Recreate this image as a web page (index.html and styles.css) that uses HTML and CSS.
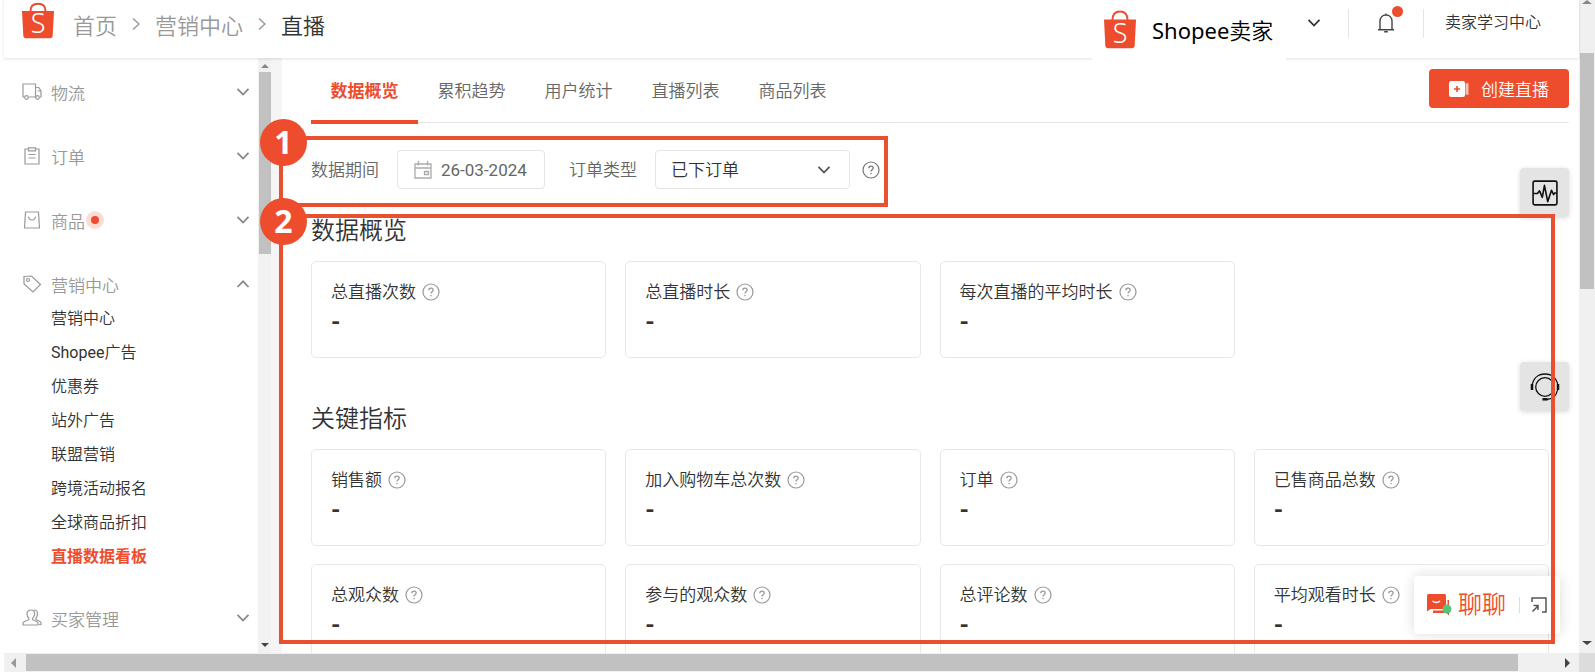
FILE: index.html
```html
<!DOCTYPE html>
<html lang="zh-CN">
<head>
<meta charset="utf-8">
<title>直播数据看板</title>
<link rel="stylesheet" href="styles.css">
</head>
<body>
<svg class="sprite" aria-hidden="true">
  <symbol id="down" viewBox="0 0 14 10"><path d="M1.500 1.800 7 7.500l5.500-5.700" fill="none" stroke="currentColor" stroke-width="1.800"/></symbol>
  <symbol id="up" viewBox="0 0 14 10"><path d="M1.500 8 7 2.300 12.500 8" fill="none" stroke="currentColor" stroke-width="1.800"/></symbol>
  <symbol id="next" viewBox="0 0 8 14"><path d="M1 1.500 7 7l-6 5.500" fill="none" stroke="currentColor" stroke-width="1.500"/></symbol>
  <symbol id="help" viewBox="0 0 18 18">
    <circle cx="9" cy="9" r="8" fill="none" stroke="currentColor" stroke-width="1.200"/>
    <path d="M6.800 7.300c0-1.400.9-2.200 2.200-2.200s2.200.8 2.200 2c0 1.600-2.200 1.700-2.200 3.400M9 11.900v1.300" fill="none" stroke="currentColor" stroke-width="1.300"/>
  </symbol>
</svg>

<div class="window">
  <div class="view">
    <div class="page">
      <header class="topbar">
        <svg class="logo" viewBox="0 0 32 39">
          <path d="M8.500 11C8.500 6 11.500 3.700 16 3.700s7.500 2.300 7.500 7.300" fill="none" stroke="#ee4d2d" stroke-width="2"/>
          <path d="M0 11h32l-1.300 24.500a2.800 2.800 0 0 1-2.800 2.700H4.100a2.800 2.800 0 0 1-2.800-2.700z" fill="#ee4d2d"/>
          <text x="16" y="33" text-anchor="middle" class="bag-letter">S</text>
        </svg>
        <nav class="crumbs" aria-label="面包屑">
          <a href="#">首页</a>
          <svg class="crumb-arrow"><use href="#next"/></svg>
          <a href="#">营销中心</a>
          <svg class="crumb-arrow"><use href="#next"/></svg>
          <span class="current">直播</span>
        </nav>
        <div class="account">
          <svg class="logo" viewBox="0 0 32 39">
            <path d="M8.500 10C8.500 4 11.500 1.500 16 1.500s7.500 2.500 7.500 8.500" fill="none" stroke="#ee4d2d" stroke-width="2"/>
            <path d="M0 9.500h32l-1.300 26a2.800 2.800 0 0 1-2.800 2.700H4.100a2.800 2.800 0 0 1-2.800-2.700z" fill="#ee4d2d"/>
            <text x="16" y="33" text-anchor="middle" class="bag-letter">S</text>
          </svg>
          <span><span class="latin">Shopee</span>卖家</span>
        </div>
        <div class="tools">
          <button class="plain account-toggle" aria-label="账户菜单"><svg class="chevron"><use href="#down"/></svg></button>
          <button class="plain bell" aria-label="通知">
            <svg viewBox="0 0 18 20" width="18" height="20" fill="none" stroke="#444" stroke-width="1.400"><path d="M1 16.800h16M3 16.500V8.500C3 4.500 5.500 2 9 2s6 2.500 6 6.500v8M9 2V.5M7.200 18.700h3.600"/></svg>
            <span class="bell-dot"></span>
          </button>
          <a class="learn" href="#">卖家学习中心</a>
        </div>
      </header>

      <div class="body">
        <aside class="sidebar">
          <nav class="menu">
            <button class="plain group">
              <svg viewBox="0 0 20 18" width="20" height="18" class="line"><path d="M2.500 14H1V1h12.500v13H7M13.500 4.500h3.200L19 8v6h-1M15.500 8H19"/><circle cx="4.500" cy="14.500" r="1.800"/><circle cx="15.500" cy="14.500" r="1.800"/></svg>
              <span>物流</span><svg class="chevron"><use href="#down"/></svg>
            </button>
            <button class="plain group">
              <svg viewBox="0 0 20 18" width="20" height="18" class="line"><path d="M6.500 2H3v15h14V2h-3.500M6.500.8h7v3h-7zM6.500 7.500h7M6.500 11h7"/></svg>
              <span>订单</span><svg class="chevron"><use href="#down"/></svg>
            </button>
            <button class="plain group">
              <svg viewBox="0 0 20 18" width="20" height="18" class="line"><path d="M3.500 1h13l1 16h-15zM6.500 5.500c.3 2.300 1.500 3.500 3.500 3.500s3.200-1.200 3.500-3.500"/></svg>
              <span>商品</span><i class="pulse"></i><svg class="chevron"><use href="#down"/></svg>
            </button>
            <button class="plain group">
              <svg viewBox="0 0 20 18" width="20" height="18" class="line"><path d="M2 1.500 9.500 1l9 8.500-7.500 7.500L2 9z"/><circle cx="6" cy="5" r="1.500"/></svg>
              <span>营销中心</span><svg class="chevron"><use href="#up"/></svg>
            </button>
            <div class="submenu">
              <a href="#">营销中心</a>
              <a href="#"><span class="latin">Shopee</span>广告</a>
              <a href="#">优惠券</a>
              <a href="#">站外广告</a>
              <a href="#">联盟营销</a>
              <a href="#">跨境活动报名</a>
              <a href="#">全球商品折扣</a>
              <a href="#" class="selected">直播数据看板</a>
            </div>
            <button class="plain group">
              <svg viewBox="0 0 20 18" width="20" height="18" class="line"><path d="M9 1C6.500 1 5 2.700 5 5c0 1.800.6 3 1.800 4v1.700L2 12.800c-.7.400-1 1-1 1.700V16h15v-1.500c0-.7-.3-1.300-1-1.700l-4.300-2.100V9C12 8 12.700 6.800 12.700 5 12.700 2.700 11.500 1 9 1zM12 1c2.500 0 3.500 2 3.500 4s-.5 3-1.500 4v1.500l4 2c.7.400 1 1 1 1.700V15.500h-2"/></svg>
              <span>买家管理</span><svg class="chevron"><use href="#down"/></svg>
            </button>
          </nav>
          <div class="side-scroll" aria-hidden="true">
            <i class="tri up"></i><i class="side-thumb"></i><i class="tri down"></i>
          </div>
        </aside>

        <main class="main">
          <div class="tabbar">
            <nav class="tabs">
              <a href="#" class="active">数据概览</a>
              <a href="#">累积趋势</a>
              <a href="#">用户统计</a>
              <a href="#">直播列表</a>
              <a href="#">商品列表</a>
            </nav>
            <button class="create">
              <svg viewBox="0 0 20 18" width="20" height="18"><rect x="0" y="1" width="16" height="16" rx="2" fill="#fff"/><path d="M16.500 3.500 19.500 3v12l-3-.5z" fill="#fbc0b2"/><path d="M8 6v6M5 9h6" stroke="#ee4d2d" stroke-width="1.600"/></svg>
              创建直播
            </button>
          </div>

          <form class="filters">
            <label for="period">数据期间</label>
            <div class="field date">
              <svg viewBox="0 0 18 18" width="18" height="18" fill="none" stroke="#aaa" stroke-width="1.300"><path d="M1 3h16v14H1zM1 7h16M4.500 0v4.500M13.500 0v4.500M10.500 10.500h4v3h-4z"/></svg>
              <input id="period" type="text" value="26-03-2024">
            </div>
            <label for="kind" class="second">订单类型</label>
            <div class="field kind">
              <select id="kind"><option>已下订单</option></select>
              <svg class="chevron"><use href="#down"/></svg>
            </div>
            <svg class="help dark"><use href="#help"/></svg>
          </form>

          <section class="block">
            <h2>数据概览</h2>
            <div class="cards">
              <article class="card"><h3>总直播次数<svg class="help"><use href="#help"/></svg></h3><p>-</p></article>
              <article class="card"><h3>总直播时长<svg class="help"><use href="#help"/></svg></h3><p>-</p></article>
              <article class="card"><h3>每次直播的平均时长<svg class="help"><use href="#help"/></svg></h3><p>-</p></article>
            </div>
          </section>

          <section class="block">
            <h2>关键指标</h2>
            <div class="cards">
              <article class="card"><h3>销售额<svg class="help"><use href="#help"/></svg></h3><p>-</p></article>
              <article class="card"><h3>加入购物车总次数<svg class="help"><use href="#help"/></svg></h3><p>-</p></article>
              <article class="card"><h3>订单<svg class="help"><use href="#help"/></svg></h3><p>-</p></article>
              <article class="card"><h3>已售商品总数<svg class="help"><use href="#help"/></svg></h3><p>-</p></article>
              <article class="card"><h3>总观众数<svg class="help"><use href="#help"/></svg></h3><p>-</p></article>
              <article class="card"><h3>参与的观众数<svg class="help"><use href="#help"/></svg></h3><p>-</p></article>
              <article class="card"><h3>总评论数<svg class="help"><use href="#help"/></svg></h3><p>-</p></article>
              <article class="card"><h3>平均观看时长<svg class="help"><use href="#help"/></svg></h3><p>-</p></article>
            </div>
          </section>
        </main>
      </div>
    </div>
    <div class="page-scroll" aria-hidden="true">
      <i class="tri up"></i><i class="page-thumb"></i><i class="tri down"></i>
    </div>
  </div>
  <div class="wide-scroll" aria-hidden="true">
    <i class="tri left"></i><i class="wide-thumb"></i><i class="tri right"></i><i class="corner"></i>
  </div>

  <button class="float monitor" aria-label="诊断">
    <svg viewBox="0 0 24 24" width="26" height="26" fill="none" stroke="#111" stroke-width="1.500" stroke-linejoin="round"><rect x="1" y="1" width="22" height="22" rx="1.500"/><path d="M1 12.500h4L7 10l2.500 6 2-11 3 15 3.500-10.500 2 4 1-1.500h2"/></svg>
  </button>
  <button class="float support" aria-label="客服">
    <svg viewBox="0 0 30 28" width="30" height="28" fill="none" stroke="#111"><circle cx="15" cy="14" r="9.300" stroke-width="1.300"/><path d="M2 13C3 5.500 8 1 15 1s12 4.500 13 12M27.500 17c-1 5.500-5 9-10.500 9.500" stroke-width="1.300"/><path d="M2 11v6M28 11v6" stroke-width="2.500"/><path d="M12.500 26.300h5" stroke-width="2.500"/></svg>
  </button>
  <div class="chat">
    <svg viewBox="0 0 25 22" width="25" height="22"><path d="M1.500 0h16A1.500 1.500 0 0 1 19 1.500V15H3.500L0 17.500v-16A1.500 1.500 0 0 1 1.500 0z" fill="#ee4d2d"/><path d="M20.500 6h1.500v15.500L19.500 19H6v-2.500h14.500z" fill="#ee4d2d"/><path d="M5.500 7c2 2 5.500 2 7.500 0" fill="none" stroke="#fff" stroke-width="1.300"/><circle cx="20" cy="15" r="4.500" fill="#55c57a"/></svg>
    <button class="plain chat-open">聊聊</button>
    <button class="plain chat-pop" aria-label="弹出"><svg viewBox="0 0 16 16" width="16" height="16" fill="none" stroke="#555" stroke-width="1.500"><path d="M1 5V1h14v14h-4M1.500 14.500 7 9M2.500 8.500H7V13"/></svg></button>
  </div>

  <div class="mark mark-one"><b>1</b></div>
  <div class="mark mark-two"><b>2</b></div>
</div>
</body>
</html>
```

FILE: styles.css
```css
* { box-sizing: border-box; }

body {
  margin: 0;
  background: #fff;
  color: #333;
  font-family: Roboto, "Noto Sans CJK SC", sans-serif;
  font-weight: 350;
  font-size: 17px;
}

a { color: inherit; text-decoration: none; }
svg { display: block; flex: none; }
h2, h3, p { margin: 0; font-weight: 350; }
button, input, select { font: inherit; color: inherit; }

.plain { border: 0; padding: 0; background: none; }
.latin { font-weight: 400; }
.sprite { position: absolute; width: 0; height: 0; }
.bag-letter { font-family: "Noto Sans", sans-serif; font-size: 27px; font-weight: 350; fill: #fff; }

.window { position: relative; display: flex; flex-direction: column; height: 100vh; overflow: hidden; }
.view { flex: 1; display: flex; min-height: 0; }
.page { flex: 1; min-width: 0; display: flex; flex-direction: column; padding-left: 4px; }

.logo { width: 32px; height: 39px; }
.chevron { width: 14px; height: 10px; }
.help { width: 18px; height: 18px; color: #999; }
.help.dark { color: #777; }

/* top bar */
.topbar {
  position: relative;
  z-index: 1;
  display: flex;
  align-items: flex-start;
  height: 58px;
  padding-left: 18px;
  background: #fff;
  box-shadow: 0 1px 3px rgba(0, 0, 0, .12);
}
.crumbs {
  flex: 1;
  display: flex;
  align-items: center;
  gap: 15px;
  height: 48px;
  padding-left: 19px;
  color: #999;
  font-size: 22px;
}
.crumb-arrow { width: 8px; height: 14px; }
.current { color: #333; }
.account {
  display: flex;
  align-items: center;
  gap: 16px;
  width: 194px;
  height: 62px;
  padding: 0 0 4px 12px;
  background: #fff;
  color: #000;
  font-family: "Noto Sans", "Noto Sans CJK SC", sans-serif;
  font-size: 22px;
}
.tools { display: flex; align-items: center; height: 46px; }
.account-toggle { padding: 0 27px 0 21px; color: #333; }
.bell {
  position: relative;
  display: flex;
  align-items: center;
  justify-content: center;
  width: 76px;
  height: 29px;
  border: solid #e5e5e5;
  border-width: 0 1px;
}
.bell-dot { position: absolute; top: -3px; right: 20px; width: 11px; height: 11px; border-radius: 50%; background: #ee4d2d; }
.learn { padding: 0 38px 0 21px; font-size: 16px; line-height: 44px; }

.body { flex: 1; display: flex; min-height: 0; overflow: hidden; background: #f5f5f5; }

/* side menu */
.sidebar { flex: none; display: flex; width: 267px; margin-right: 11px; background: #fff; }
.menu { flex: 1; display: flex; flex-direction: column; gap: 30px; padding: 17px 8px 0 18px; }
.group { display: flex; align-items: center; height: 34px; flex: none; color: #999; text-align: left; }
.group span { margin-left: 9px; }
.group .chevron { margin-left: auto; color: #888; }
.line { fill: none; stroke: #999; stroke-width: 1.200; }
.pulse { width: 18px; height: 18px; margin-left: 1px; border: 5px solid #fcdcd5; border-radius: 50%; background: #ee4d2d; }
.submenu { display: flex; flex-direction: column; margin-top: -29px; padding-left: 29px; margin-bottom: -3px; font-size: 16px; line-height: 34px; }
.selected { color: #ee4d2d; font-weight: 700; }

/* scroll bars */
.tri { width: 0; height: 0; border: 4px solid transparent; flex: none; }
.tri.up { border-top: 0; border-bottom-color: #888; }
.tri.down { border-bottom: 0; border-top-color: #444; }
.tri.left { border-width: 5px; border-left: 0; border-right-color: #999; }
.tri.right { border-width: 5px; border-right: 0; border-left-color: #444; }
.side-scroll { display: flex; flex-direction: column; align-items: center; width: 13px; padding: 6px 0; background: #f1f1f1; }
.side-thumb { width: 12px; height: 182px; margin: 4px 0 auto; background: #c1c1c1; }
.page-scroll { flex: none; display: flex; flex-direction: column; align-items: center; width: 16px; padding-bottom: 8px; background: #f0f0f0; }
.page-scroll .tri { border-left-width: 5px; border-right-width: 5px; }
.page-thumb { width: 14px; height: 236px; margin: 49px 0 auto; background: #c1c1c1; }
.wide-scroll { display: flex; align-items: center; height: 19px; margin-left: 4px; padding-left: 7px; background: #f0f0f0; }
.wide-thumb { flex: 1; height: 17px; margin: 0 47px 0 10px; background: #c1c1c1; }
.corner { width: 16px; height: 19px; margin-left: 9px; background: #dcdcdc; }

/* main column */
.main { flex: 1; min-width: 0; padding: 0 10px 0 29px; background: #fff; overflow: hidden; }
.tabbar { display: flex; height: 65px; border-bottom: 1px solid #e8e8e8; }
.tabs { flex: 1; display: flex; color: #666; }
.tabs a { width: 107px; height: 66px; line-height: 66px; text-align: center; }
.tabs .active { box-shadow: inset 0 -4px #ee4d2d; color: #ee4d2d; font-weight: 700; }
.create {
  display: flex;
  align-items: center;
  gap: 12px;
  height: 39px;
  margin-top: 11px;
  padding: 0 20px;
  border: 0;
  border-radius: 4px;
  background: #ee4d2d;
  color: #fff;
}

.filters { display: flex; align-items: center; padding-top: 27px; color: #666; }
.filters label { padding-bottom: 2px; }
.field { display: flex; align-items: center; height: 39px; margin-left: 18px; border: 1px solid #e5e5e5; border-radius: 4px; background: #fff; }
.field input, .field select { border: 0; padding: 0; background: none; outline: 0; }
.date { width: 148px; padding-left: 16px; gap: 9px; font-weight: 400; }
.date input { width: 96px; }
.second { margin-left: 24px; }
.kind { position: relative; width: 195px; margin-right: 12px; color: #333; }
.kind select { width: 100%; height: 100%; padding-left: 15px; appearance: none; }
.kind .chevron { position: absolute; right: 18px; color: #555; pointer-events: none; }

.block { padding: 27px 20px 0 0; }
.block + .block { padding-top: 46px; }
h2 { font-size: 24px; line-height: 30px; }
.cards { display: grid; grid-template-columns: repeat(4, 1fr); gap: 18px 19px; margin-top: 15px; }
.card { height: 97px; padding: 17px 19px; border: 1px solid #e8e8e8; border-radius: 5px; }
.card h3 { display: flex; align-items: center; gap: 6px; font-size: 17px; line-height: 26px; }
.card p { font-size: 24px; font-weight: 700; line-height: 34px; }

/* floating widgets */
.float {
  position: absolute;
  right: 26px;
  display: grid;
  place-items: center;
  width: 49px;
  height: 49px;
  border: 0;
  border-radius: 4px;
  background: #e4e4e4;
  box-shadow: 0 1px 5px rgba(0, 0, 0, .15);
}
.monitor { top: 168px; }
.support { top: 362px; }
.chat {
  position: absolute;
  right: 35px;
  bottom: 38px;
  display: flex;
  align-items: center;
  width: 146px;
  height: 58px;
  padding: 0 13px;
  border-radius: 4px;
  background: #fff;
  box-shadow: 0 0 14px rgba(0, 0, 0, .14);
}
.chat-open { margin: 0 13px 0 6px; color: #ee4d2d; font-size: 24px; line-height: 32px; }
.chat-pop { padding-left: 11px; border-left: 1px solid #ddd; }

/* numbered callouts */
.mark { position: absolute; left: 279px; border: 4px solid #e8502f; pointer-events: none; }
.mark b {
  position: absolute;
  left: -23px;
  width: 47px;
  height: 47px;
  border-radius: 50%;
  background: #ee4d2d;
  color: #fff;
  font: 700 32px/46px "Open Sans", sans-serif;
  text-align: center;
}
.mark-one { top: 136px; width: 609px; height: 71px; }
.mark-one b { top: -21px; }
.mark-two { top: 214px; right: 40px; bottom: 28px; }
.mark-two b { top: -20px; }
```
